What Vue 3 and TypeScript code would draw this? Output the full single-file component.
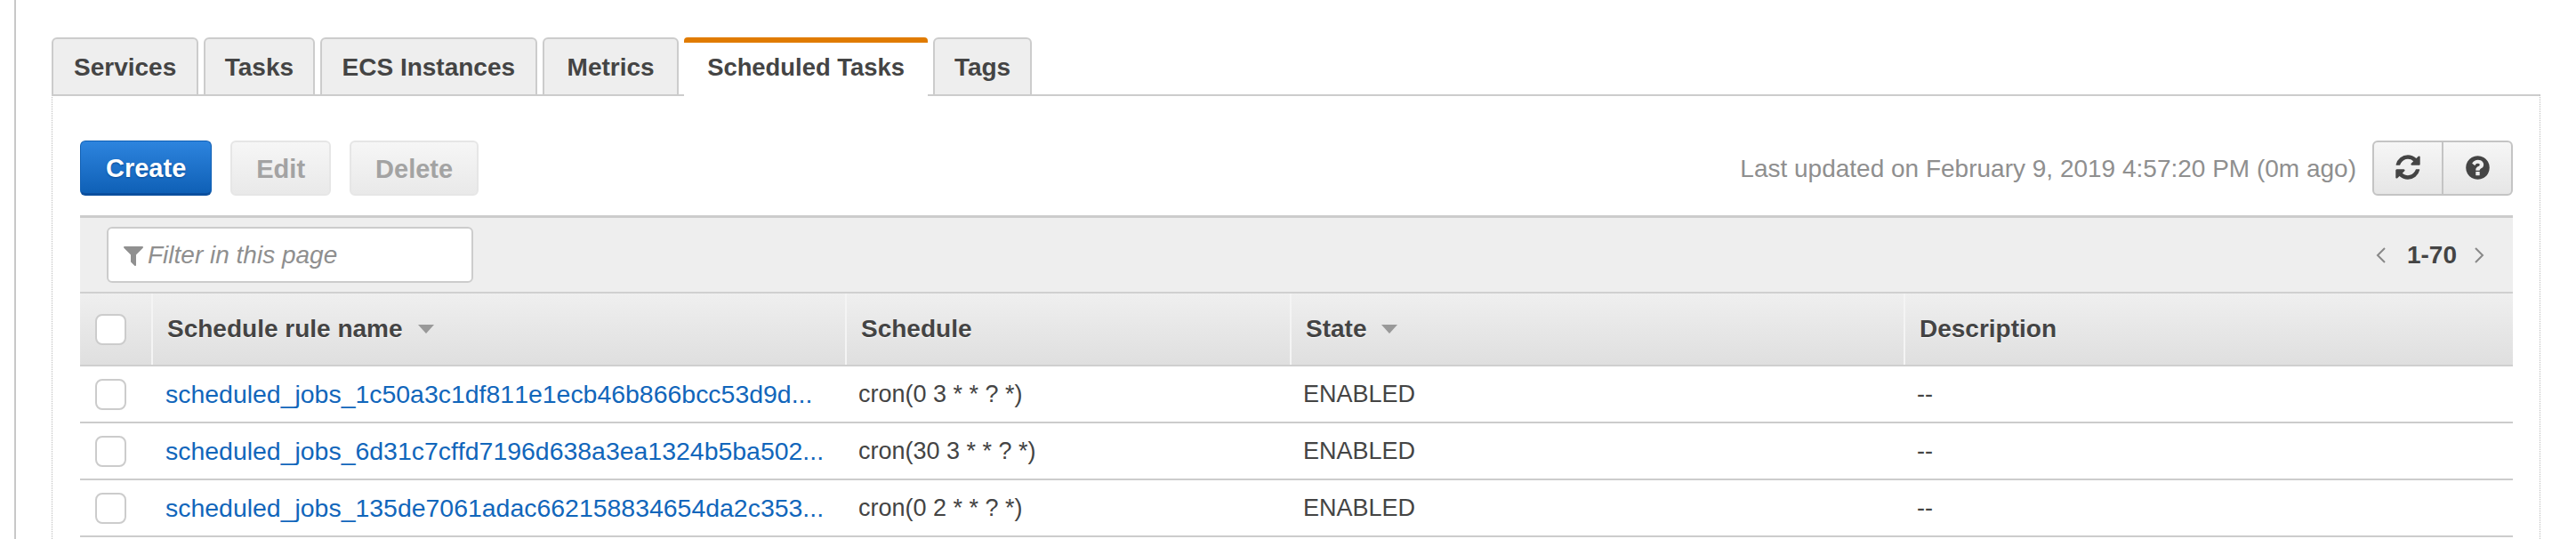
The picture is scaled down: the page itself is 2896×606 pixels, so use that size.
<script setup lang="ts">
const tabs = ['Services', 'Tasks', 'ECS Instances', 'Metrics', 'Scheduled Tasks', 'Tags']
const activeTab = 'Scheduled Tasks'

const columns = [
  { label: 'Schedule rule name', sortable: true },
  { label: 'Schedule', sortable: false },
  { label: 'State', sortable: true },
  { label: 'Description', sortable: false },
]

const rows = [
  { name: 'scheduled_jobs_1c50a3c1df811e1ecb46b866bcc53d9d...', cron: 'cron(0 3 * * ? *)' },
  { name: 'scheduled_jobs_6d31c7cffd7196d638a3ea1324b5ba502...', cron: 'cron(30 3 * * ? *)' },
  { name: 'scheduled_jobs_135de7061adac662158834654da2c353...', cron: 'cron(0 2 * * ? *)' },
]
</script>

<template>
  <div class="page">
    <nav class="tabs">
      <div v-for="tab in tabs" :key="tab" class="tab" :class="{ active: tab === activeTab }">{{ tab }}</div>
    </nav>

    <section class="panel">
      <div class="toolbar">
        <button class="btn primary">Create</button>
        <button class="btn" disabled>Edit</button>
        <button class="btn" disabled>Delete</button>
        <span class="updated">Last updated on February 9, 2019 4:57:20 PM (0m ago)</span>
        <div class="icon-group">
          <button class="icon-btn">
            <svg viewBox="0 0 1792 1792" width="32" height="32"><path d="M1639 1056q0 5-1 7-64 268-268 434.5t-478 166.5q-146 0-282.5-55t-243.5-157l-129 129q-19 19-45 19t-45-19-19-45v-448q0-26 19-45t45-19h448q26 0 45 19t19 45-19 45l-137 137q71 66 161 102t187 36q134 0 250-65t186-179q11-17 53-117 8-23 30-23h192q13 0 22.5 9.5t9.5 22.5zm25-800v448q0 26-19 45t-45 19h-448q-26 0-45-19t-19-45 19-45l138-138q-148-137-349-137-134 0-250 65t-186 179q-11 17-53 117-8 23-30 23h-199q-13 0-22.5-9.5t-9.5-22.5v-7q65-268 270-434.5t480-166.5q146 0 284 55.5t245 156.5l130-129q19-19 45-19t45 19 19 45z" /></svg>
          </button>
          <button class="icon-btn">
            <svg viewBox="0 0 1792 1792" width="31" height="31"><path d="M1024 1376v-192q0-14-9-23t-23-9h-192q-14 0-23 9t-9 23v192q0 14 9 23t23 9h192q14 0 23-9t9-23zm256-672q0-88-55.5-163t-138.5-116-170-41q-243 0-371 213-15 24 8 42l132 100q7 6 19 6 16 0 25-12 53-68 86-92 34-24 86-24 48 0 85.5 26t37.5 59q0 38-20 61t-68 45q-63 28-115.5 86.5t-52.5 125.5v36q0 14 9 23t23 9h192q14 0 23-9t9-23q0-19 21.5-49.5t54.5-49.5q32-18 49-28.5t46-35 44.5-48 28-60.5 12.5-81zm384 192q0 209-103 385.5t-279.5 279.5-385.5 103-385.5-103-279.5-279.5-103-385.5 103-385.5 279.5-279.5 385.5-103 385.5 103 279.5 279.5 103 385.5z" /></svg>
          </button>
        </div>
      </div>

      <div class="filter-bar">
        <div class="filter">
          <svg class="funnel" viewBox="0 0 1792 1792" width="28" height="28"><path d="M1595 295q17 41-14 70l-493 493v742q0 42-39 59-13 5-25 5-27 0-45-19l-256-256q-19-19-19-45v-486l-493-493q-31-29-14-70 17-39 59-39h1280q42 0 59 39z" /></svg>
          <span>Filter in this page</span>
        </div>
        <div class="pager">
          <svg viewBox="0 0 12 20" width="12" height="20"><path d="M10 2 2 10l8 8" /></svg>
          <b>1-70</b>
          <svg viewBox="0 0 12 20" width="12" height="20"><path d="m2 2 8 8-8 8" /></svg>
        </div>
      </div>

      <div class="grid head">
        <div class="check-cell"><span class="check"></span></div>
        <div v-for="col in columns" :key="col.label" class="th">
          {{ col.label }}<i v-if="col.sortable" class="sort"></i>
        </div>
      </div>

      <div v-for="row in rows" :key="row.name" class="grid row">
        <div class="check-cell"><span class="check"></span></div>
        <div class="td name"><a>{{ row.name }}</a></div>
        <div class="td">{{ row.cron }}</div>
        <div class="td">ENABLED</div>
        <div class="td">--</div>
      </div>
    </section>
  </div>
</template>

<style scoped>
* { box-sizing: border-box; }

.page {
  height: 606px;
  margin-left: 16px;
  padding: 42px 0 0 40px;
  border-left: 2px solid #c8c8c8;
  overflow: hidden;
  font-family: "Liberation Sans", Arial, sans-serif;
  font-size: 28px;
  color: #444;
}

.tabs {
  display: flex;
  gap: 6px;
  position: relative;
  z-index: 1;
  height: 66px;
}

.tab {
  height: 66px;
  padding: 0 23px;
  line-height: 64px;
  font-weight: 700;
  background: #eee;
  border: 2px solid #ccc;
  border-radius: 6px 6px 0 0;
}

/* Tasks and Tags run a bit tight, Metrics a bit loose */
.tab:nth-child(2) { padding: 0 21.5px; }
.tab:nth-child(4) { padding: 0 25.5px; }
.tab:nth-child(6) { padding: 0 22px; }

.tab.active {
  padding: 0 26px;
  font-size: 27.4px;
  line-height: 56px;
  background: #fff;
  border: 0;
  border-top: 6px solid #e07b00;
  border-radius: 4px 4px 0 0;
}

.panel {
  width: 2798px;
  min-height: 500px;
  margin-top: -2px;
  padding: 50px 30px 0 31px;
  border-top: 2px solid #ccc;
  border-left: 1px dotted #bbb;
  border-right: 1px dotted #bbb;
}

.toolbar {
  display: flex;
  align-items: center;
  gap: 21px;
  height: 62px;
  margin-bottom: 22px;
}

.btn {
  height: 62px;
  padding: 2px 27px 0;
  font: 700 29px "Liberation Sans", Arial, sans-serif;
  color: #a3a3a3;
  background: linear-gradient(#f6f6f6, #e9e9e9);
  border: 2px solid #e6e6e6;
  border-radius: 6px;
}

.btn.primary {
  padding: 2px 28px 0;
  color: #fff;
  text-shadow: 0 1px 2px #0b4a94;
  background: linear-gradient(#2d84de, #0f60b6);
  border: 1px solid #0f5fb4;
  border-bottom: 3px solid #0b4f9e;
}

.updated {
  margin-left: auto;
  margin-right: -3px;
  padding-top: 2px;
  color: #8f8f8f;
}

.icon-group {
  display: flex;
  width: 158px;
  height: 62px;
  border: 2px solid #c4c4c4;
  border-radius: 6px;
  background: linear-gradient(#f6f6f6, #e6e6e6);
}

.icon-btn {
  flex: 1;
  display: flex;
  align-items: center;
  justify-content: center;
  padding: 0 0 2px;
  background: none;
  border: 0;
}

.icon-btn + .icon-btn { border-left: 2px solid #c4c4c4; }
.icon-btn path { fill: #444; }

.filter-bar {
  display: flex;
  align-items: center;
  justify-content: space-between;
  height: 86px;
  padding: 0 32px 0 30px;
  background: #eee;
  border-top: 3px solid #ccc;
}

.filter {
  display: flex;
  align-items: center;
  gap: 2px;
  width: 412px;
  height: 63px;
  padding-left: 14px;
  background: #fff;
  border: 2px solid #ccc;
  border-radius: 6px;
  font-style: italic;
  color: #8f8f8f;
}

.funnel path { fill: #909090; }

.pager {
  display: flex;
  align-items: center;
  gap: 21px;
  color: #444;
}

.pager b {
  margin-left: 2px;
  margin-right: -2px;
}

.pager path {
  fill: none;
  stroke: #888;
  stroke-width: 2;
}

.grid {
  display: grid;
  grid-template-columns: 80px 780px 500px 690px 1fr;
}

.head {
  height: 84px;
  background: linear-gradient(#efefef, #dfdfdf);
  border-top: 2px solid #d0d0d0;
  border-bottom: 2px solid #cfcfcf;
}

.check-cell {
  display: flex;
  align-items: center;
  padding-left: 17px;
}

.check {
  width: 35px;
  height: 35px;
  background: #fff;
  border: 2px solid #ccc;
  border-radius: 8px;
}

.th {
  display: flex;
  align-items: center;
  padding-left: 16px;
  font-weight: 700;
  text-shadow: 0 1px 0 #fff;
  border-left: 2px solid #f4f4f4;
}

.sort {
  width: 0;
  height: 0;
  margin-left: 17px;
  border-left: 9px solid transparent;
  border-right: 9px solid transparent;
  border-top: 10px solid #999;
}

.row {
  height: 64px;
  border-bottom: 2px solid #ccc;
}

.td {
  display: flex;
  align-items: center;
  min-width: 0;
  padding-left: 15px;
  font-size: 27px;
}

.name {
  padding-left: 16px;
  font-size: 28.45px;
  font-kerning: none;
  white-space: nowrap;
}

.name a { color: #1166bb; }
</style>

<style>
html, body { background: #fff; }
</style>
